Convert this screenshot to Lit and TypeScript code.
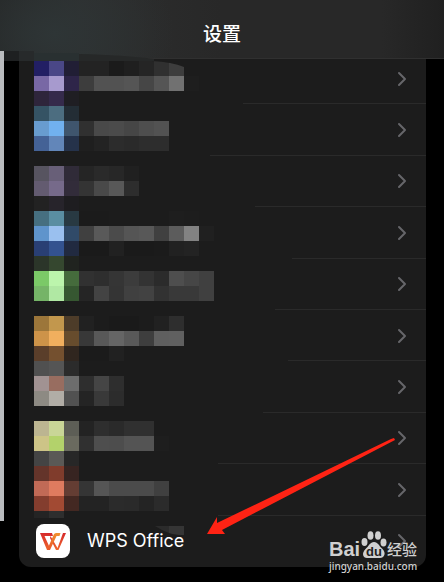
import { LitElement, html, svg, css } from "lit";
import { customElement } from "lit/decorators.js";

const C = 15;
// One entry per mosaic line: line index, then its cell colours from the left
const MOSAIC: [number, string][] = [
  [0, "221f64 4a4787 211e35 232323 232323 1b1b1b 1f1f1f 252525 303030 3d3d3d"],
  [1, "7868a5 a79ace 2e2549 3d3d3d 525252 525252 555555 464646 555555 717171 1e1e1e"],
  [2, "2e253b 352a4b 1f1e23"],
  [3, "355364 4c6d80 232d35"],
  [4, "689ccf 71b1ef 3f556d 303030 494949 4b4b4b 464646 4e4e4e 525252"],
  [5, "446296 6286b9 25324a 1f1f1f 232323 2c2c2c 2a2a2a 2d2d2d 2d2d2d"],
  [7, "575460 685f78 302b38 252525 2a2a2a 272727 202020"],
  [8, "635b70 766a8a 322c3a 343434 494949 585858 2d2d2d"],
  [9, "222222 27242b 1e1d20"],
  [10, "466f80 5a8ea2 283942 1b1b1b 1b1b1b 1c1c1c 1c1c1c 1c1c1c 1c1c1c 1e1e1e 1d1d1d"],
  [11, "5f94cc 9ac0ef 304a68 404040 595959 4b4b4b 555555 585858 404040 5c5c5c 828282 202020"],
  [12, "293f74 33528f 212a40 1a1a1a 1a1a1a 212121 1a1a1a 1a1a1a 1b1b1b 212121 232323"],
  [13, "2b3529 35472f 20231f"],
  [14, "7bc967 bcf5ac 456b3c 313131 2e2e2e 353535 3c3c3c 333333 2b2b2b 4e4e4e 464646 404040"],
  [15, "75b467 b0e8a3 365731 252525 434343 343434 404040 424242 323232 393939 393939 404040"],
  [17, "9c763a c2974d 4d3c29 212121 1c1c1c 1a1a1a 1a1a1a 1c1c1c 212121 2e2e2e"],
  [18, "cd9349 f1af5e 674c2d 383838 585858 656565 595959 3e3e3e 5f5f5f 606060"],
  [19, "5a3e2a 74502f 30261f 1b1b1b 1b1b1b 212121"],
  [20, "505050 555555 2b2b2b"],
  [21, "a19292 986d60 6d6d6d 2e2e2e 454545 2e2e2e"],
  [22, "8d8a83 b1ada6 515151 242424 393939 2c2c2c"],
  [24, "bcb591 c9d697 5d5e56 232323 2e2e2e 2a2a2a 303030 303030"],
  [25, "cdc487 b3d26b 6a6a5f 303030 4e4e4e 4d4d4d 545454 545454 1e1e1e"],
  [26, "444444 5a5956 272727"],
  [27, "64342a 803c2c 372421"],
  [28, "c16a56 df7b5f 643d33 353535 555555 4b4b4b 4b4b4b 4b4b4b 404040"],
  [29, "833d2e a24a33 432822 232323 232323 2b2b2b 2a2a2a 242424 2b2b2b"],
];

// Start of each row's divider, as a share of the panel width
const DIVIDERS = [55, 47, 58, 67, 63, 66, 60, 49, 49];

@customElement("app-root")
export class AppRoot extends LitElement {
  static styles = css`
    :host {
      display: flex;
      flex-direction: column;
      box-sizing: border-box;
      min-height: 100vh;
      background: #000;
      border-right: 2px solid #fff;
      color: #fff;
      font-family: Inter, "Noto Sans CJK SC", sans-serif;
      position: relative;
      overflow: hidden;
    }
    header {
      box-sizing: border-box;
      height: 59px;
      padding-top: 8px;
      display: flex;
      align-items: center;
      justify-content: center;
      background: radial-gradient(ellipse 120px 90px at 55px 34px, #2e3536, #2e353600),
        linear-gradient(90deg, #242525, #2d2e2e 18%, #282828 50%, #282828 86%, #202020);
      border-bottom: 1px solid #303030;
      position: relative;
      z-index: 1;
    }
    h1 {
      margin: 0;
      font-size: 19px;
      line-height: 28px;
      font-weight: 500;
      font-family: "Noto Sans CJK SC", sans-serif;
    }
    .body {
      flex: 1;
      display: flex;
      margin-top: -8px;
      padding-bottom: 15px;
    }
    .edge {
      width: 4px;
      margin-bottom: 46px;
      background: #b9bbbe;
      position: relative;
      z-index: 2;
    }
    .fold {
      position: absolute;
      left: 4px;
      top: 51px;
      z-index: 2;
    }
    .panel {
      flex: 1;
      margin: 2px 18px 0 15px;
      background: #1c1c1c;
      border-radius: 0 0 12px 12px;
      position: relative;
      display: flex;
    }
    ul {
      flex: 1;
      list-style: none;
      margin: 0;
      padding: 0;
      display: grid;
      grid-auto-rows: 1fr;
    }
    li {
      display: flex;
      position: relative;
    }
    .row {
      flex: 1;
      display: flex;
      align-items: center;
      padding: 0 18px 0 17px;
      color: inherit;
      text-decoration: none;
      font-size: 18px;
      line-height: 24px;
    }
    .name {
      flex: 1;
      padding-left: 17px;
    }
    .divider {
      position: absolute;
      right: 0;
      bottom: 0;
      height: 1px;
      background: #2a2a2a;
    }
    .mosaic {
      position: absolute;
      left: 15px;
      top: 8px;
      pointer-events: none;
    }
    .arrow {
      position: absolute;
      right: 47px;
      bottom: 46px;
      pointer-events: none;
    }
    .mark {
      position: absolute;
      right: 27px;
      bottom: 9px;
      width: 88px;
      color: #d0d0d0;
      pointer-events: none;
    }
    .brand {
      display: flex;
      align-items: flex-end;
      justify-content: space-between;
      font: 700 20px/20px "Liberation Sans", sans-serif;
    }
    .cn {
      font: 500 15px/20px "Noto Sans CJK SC", sans-serif;
    }
    .site {
      font: 500 10px/14px "Noto Sans", sans-serif;
      white-space: nowrap;
    }
    svg {
      display: block;
      flex: none;
    }
  `;

  private chevron() {
    return html`<svg width="12" height="16" viewBox="0 0 12 16" aria-hidden="true">
      <path d="M3 2 L9 8 L3 14" fill="none" stroke="#66666a" stroke-width="2" stroke-linecap="round" stroke-linejoin="round" />
    </svg>`;
  }

  private logo() {
    return html`<svg width="34" height="34" viewBox="0 0 34 34" aria-hidden="true">
      <defs>
        <linearGradient id="w" gradientUnits="userSpaceOnUse" x1="0" y1="8" x2="0" y2="26">
          <stop offset="0" stop-color="#d4262c" />
          <stop offset="1" stop-color="#f0682c" />
        </linearGradient>
        <linearGradient id="v" gradientUnits="userSpaceOnUse" x1="12" y1="24" x2="20" y2="9">
          <stop offset="0" stop-color="#ea5a2a" />
          <stop offset="1" stop-color="#f0902e" />
        </linearGradient>
      </defs>
      <rect width="34" height="34" rx="8" fill="#fff" />
      <path d="M4 9 H16 L17 12 H8.500 L13.500 23 L12.500 26 H11 Z" fill="url(#w)" />
      <path d="M14.500 12 L21.500 24 L27 9 H30 L22.500 26 H20 L14 14 Z" fill="url(#w)" />
      <path d="M11 26 L17.800 10.500 Q18.500 9 20 9 H24.500 L23.500 12 H20.500 L14 26 Z" fill="url(#v)" />
    </svg>`;
  }

  private mosaic() {
    return html`<svg class="mosaic" width="190" height="476" viewBox="0 0 190 476" aria-hidden="true">
      <g shape-rendering="crispEdges">
        ${MOSAIC.map(([line, row]) =>
          row.split(" ").map(
            (c, i) => svg`<rect x=${i * C} y=${line * C} width=${C} height=${C} fill=${"#" + c} />`
          )
        )}
        <rect x="0" y="450" width="15" height="7" fill="#242424" />
        <rect x="15" y="450" width="15" height="7" fill="#2e2e2e" />
      </g>
      <path d="M121 465 H135 V472 Q127 469 121 465Z" fill="#2b2b2b" />
      <path d="M135 465 H150 V474 Q141 474 135 472Z" fill="#353535" />
      <path d="M118 0 Q138 1 150 6 V0Z" fill="#1c1c1c" />
    </svg>`;
  }

  render() {
    return html`
      <header><h1>设置</h1></header>
      <svg class="fold" width="150" height="10" viewBox="0 0 150 10" aria-hidden="true">
        <rect width="15" height="10" fill="#1e2021" />
        <rect x="15" width="15" height="10" fill="#272a2b" />
        <rect x="30" y="2" width="45" height="8" fill="#293031" />
        <path d="M75 3 Q120 4 150 8 V10 H75Z" fill="#262828" />
      </svg>
      <div class="body">
        <div class="edge"></div>
        <main class="panel">
          <ul>
            ${DIVIDERS.map(
              (d) => html`<li>
                <a class="row" href="#" aria-label="App"><span class="name"></span>${this.chevron()}</a>
                <span class="divider" style="left:${d}%"></span>
              </li>`
            )}
            <li>
              <a class="row" href="#">${this.logo()}<span class="name">WPS Office</span>${this.chevron()}</a>
            </li>
          </ul>
          ${this.mosaic()}
        </main>
      </div>
      <svg class="arrow" width="190" height="100" viewBox="0 0 190 100" aria-hidden="true">
        <path fill="#ff2314" d="M0 98 L10 81 V87 L184 3 L187 2 L188 4 L15 94 L18 98 Z" />
      </svg>
      <div class="mark">
        <div class="brand">
          <span>Bai</span>
          <svg width="26" height="29" viewBox="0 0 26 29" aria-hidden="true">
            <g fill="#d0d0d0">
              <ellipse cx="3.500" cy="12" rx="3" ry="4" />
              <ellipse cx="9.500" cy="5.500" rx="3" ry="4.300" />
              <ellipse cx="17" cy="5.500" rx="3" ry="4.300" />
              <ellipse cx="22.500" cy="12.500" rx="3" ry="4" />
              <path d="M13 12 C17 12 18 16 21 18.500 C26 23 23 28 19 28 H6 C2 28 0 23 5 18.500 C8 16 9 12 13 12Z" />
            </g>
            <text x="13" y="26" text-anchor="middle" font-family="Liberation Sans, sans-serif" font-weight="700" font-size="13" fill="#222">du</text>
          </svg>
          <span class="cn">经验</span>
        </div>
        <div class="site">jingyan.baidu.com</div>
      </div>
    `;
  }
}
